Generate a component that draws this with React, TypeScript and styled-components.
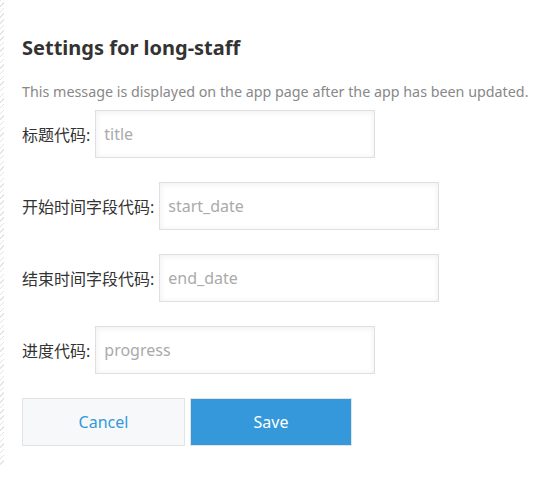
import React from 'react';
import styled, { createGlobalStyle } from 'styled-components';

const GlobalStyle = createGlobalStyle`
	html, body {
		margin: 0;
		padding: 0;
		background: #ffffff;
	}
	body {
		font-family: "Noto Sans", "Noto Sans CJK SC", sans-serif;
		color: #333333;
	}
`;

type FieldProps = {
	label: string;
	placeholder: string;
};

const FIELDS: FieldProps[] = [
	{ label: '标题代码:', placeholder: 'title' },
	{ label: '开始时间字段代码:', placeholder: 'start_date' },
	{ label: '结束时间字段代码:', placeholder: 'end_date' },
	{ label: '进度代码:', placeholder: 'progress' },
];

const App: React.FC = (): JSX.Element => {
	return (
		<>
			<GlobalStyle />
			<Page>
				<EdgeStrip />
				<SettingsPanel>
					<Title>Settings for long-staff</Title>
					<Description>
						This message is displayed on the app page after the app has been updated.
					</Description>
					<FieldList>
						{FIELDS.map((field) => (
							<FieldRow key={field.placeholder}>
								<FieldLabel>{field.label}</FieldLabel>
								<TextInput placeholder={field.placeholder} />
							</FieldRow>
						))}
					</FieldList>
					<ButtonRow>
						<ActionButton>Cancel</ActionButton>
						<ActionButton primary>Save</ActionButton>
					</ButtonRow>
				</SettingsPanel>
			</Page>
		</>
	);
};

const Page = styled.div`
	display: flex;
	width: 540px;
	height: 478px;
	overflow: hidden;
`;

const EdgeStrip = styled.div`
	width: 4px;
	height: 466px;
	flex-shrink: 0;
	background: repeating-linear-gradient(
		135deg,
		#e4e4e4 0px,
		#e4e4e4 1px,
		transparent 1px,
		transparent 4px
	);
`;

const SettingsPanel = styled.div`
	display: flex;
	flex-direction: column;
	padding: 34px 0 0 18px;
`;

const Title = styled.h2`
	margin: 0;
	font-size: 20px;
	line-height: 28px;
	font-weight: 700;
	color: #333333;
`;

const Description = styled.p`
	margin: 20px 0 8px;
	font-size: 14.3px;
	line-height: 20px;
	color: #888888;
	white-space: nowrap;
`;

const FieldList = styled.div`
	display: flex;
	flex-direction: column;
	gap: 24px;
`;

const FieldRow = styled.div`
	display: flex;
	align-items: center;
`;

const FieldLabel = styled.label`
	font-size: 16px;
	color: #333333;
	margin-right: 5px;
	white-space: nowrap;
`;

const TextInput = styled.input`
	box-sizing: border-box;
	width: 280px;
	height: 48px;
	padding: 0 8px;
	border: 1px solid #e0e0e0;
	border-radius: 0;
	background: #ffffff;
	box-shadow: inset 0 1px 6px rgba(0, 0, 0, 0.07);
	font-family: "Noto Sans", "Noto Sans CJK SC", sans-serif;
	font-size: 16px;
	color: #333333;
	outline: none;

	&::placeholder {
		color: #aaaaaa;
	}
`;

const ButtonRow = styled.div`
	display: flex;
	gap: 5px;
	margin-top: 24px;
`;

const ActionButton = styled.button<{ primary?: boolean }>`
	box-sizing: border-box;
	width: ${(p) => (p.primary ? '162px' : '163px')};
	height: 48px;
	border: 1px solid #e3e3e3;
	border-radius: 0;
	background: ${(p) => (p.primary ? '#3498db' : '#f6f8fa')};
	color: ${(p) => (p.primary ? '#ffffff' : '#3498db')};
	font-family: "Noto Sans", "Noto Sans CJK SC", sans-serif;
	font-size: 16px;
	cursor: pointer;
`;

export default App;
